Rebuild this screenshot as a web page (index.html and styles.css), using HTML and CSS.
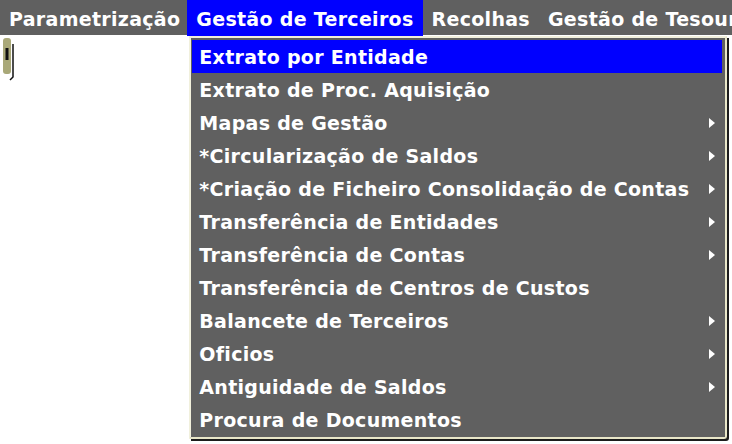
FILE: index.html
```html
<!DOCTYPE html>
<html lang="pt">
<head>
<meta charset="utf-8">
<link rel="stylesheet" href="styles.css">
</head>
<body>
<nav class="menubar">
  <div class="top first">Parametrização</div>
  <div class="top open">Gestão de Terceiros
    <ul class="dropdown">
      <li class="sel">Extrato por Entidade</li>
      <li>Extrato de Proc. Aquisição</li>
      <li class="sub">Mapas de Gestão</li>
      <li class="sub">*Circularização de Saldos</li>
      <li class="sub">*Criação de Ficheiro Consolidação de Contas</li>
      <li class="sub">Transferência de Entidades</li>
      <li class="sub">Transferência de Contas</li>
      <li>Transferência de Centros de Custos</li>
      <li class="sub">Balancete de Terceiros</li>
      <li class="sub">Oficios</li>
      <li class="sub">Antiguidade de Saldos</li>
      <li>Procura de Documentos</li>
    </ul>
  </div>
  <div class="top">Recolhas</div>
  <div class="top">Gestão de Tesouraria</div>
</nav>
<div class="content">
  <svg class="handle" width="14" height="46" viewBox="0 0 14 46">
    <rect x="1" y="2" width="8" height="36" rx="3" fill="#a9a878"/>
    <rect x="3.5" y="12" width="3" height="12" fill="#111"/>
    <path d="M11 8 V41 L8 44" stroke="#111" stroke-width="1.5" fill="none"/>
  </svg>
</div>
</body>
</html>
```

FILE: styles.css
```css
html, body {
  margin: 0;
  padding: 0;
  background: #ffffff;
  width: 732px;
  height: 444px;
  overflow: hidden;
}
body {
  font-family: "DejaVu Sans", Verdana, sans-serif;
  font-weight: bold;
  font-size: 19px;
  letter-spacing: 0.3px;
  color: #ffffff;
}
.menubar {
  display: flex;
  background: #606060;
  height: 35px;
  white-space: nowrap;
}
.top {
  position: relative;
  padding: 0 9px;
  height: 36px;
  line-height: 38px;
}
.top.first {
  padding: 0 7px 0 9px;
}
.top.open {
  background: #0000ff;
}
.dropdown {
  position: absolute;
  top: 36px;
  left: 2px;
  margin: 0;
  padding: 2px 3px 1px 1px;
  list-style: none;
  width: 530px;
  background: #606060;
  border: 2px solid #f1f0dc;
  border-right-color: #e8e6c8;
  border-bottom-color: #e8e6c8;
  box-shadow: 2px 2px 0 #1c1c1c;
  border-radius: 0 0 3px 0;
  z-index: 2;
}
.dropdown li {
  position: relative;
  height: 33px;
  line-height: 35px;
  padding-left: 7px;
}
.dropdown li.sel {
  background: #0000ff;
}
.dropdown li.sub::after {
  content: "";
  position: absolute;
  right: 7px;
  top: 12px;
  border-left: 6px solid #ffffff;
  border-top: 5px solid transparent;
  border-bottom: 5px solid transparent;
}
.content {
  padding: 1px 0 0 2px;
}
.handle {
  display: block;
}
```
